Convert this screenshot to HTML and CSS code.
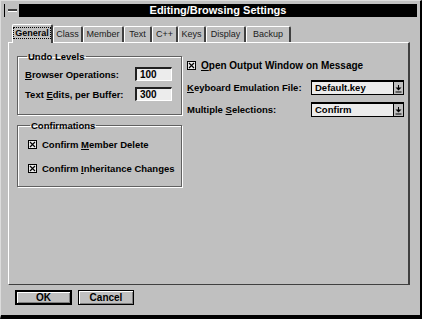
FILE: index.html
```html
<!DOCTYPE html>
<html lang="en">
<head>
  <meta charset="UTF-8">
  <title>Editing/Browsing Settings</title>
  <link rel="stylesheet" href="styles.css">
</head>
<body>
  <div class="window">

    <!-- Title bar -->
    <div class="titlebar">
      <div class="sysmenu"><span class="dash"></span></div>
      <div class="title">Editing/Browsing Settings</div>
    </div>

    <!-- Tabs -->
    <div class="tabs">
      <div class="tab active tab-general"><span class="focus">General</span></div>
      <div class="tab tab-class">Class</div>
      <div class="tab tab-member">Member</div>
      <div class="tab tab-text">Text</div>
      <div class="tab tab-cpp">C++</div>
      <div class="tab tab-keys">Keys</div>
      <div class="tab tab-display">Display</div>
      <div class="tab tab-backup">Backup</div>
    </div>

    <!-- Tab page -->
    <div class="panel">
      <div class="col-left">
        <fieldset class="group undo">
          <legend>Undo Levels</legend>
          <div class="rows">
            <div class="field-row">
              <span class="label"><u>B</u>rowser Operations:</span>
              <span class="edit">100</span>
            </div>
            <div class="field-row">
              <span class="label">Text <u>E</u>dits, per Buffer:</span>
              <span class="edit">300</span>
            </div>
          </div>
        </fieldset>

        <fieldset class="group confirm">
          <legend>Confirmations</legend>
          <div class="rows">
            <div class="check-row">
              <svg class="check" width="9" height="9" viewBox="0 0 9 9"><rect x="0.5" y="0.5" width="8" height="8" fill="#ececec" stroke="#000"/><path d="M2 2L7 7M7 2L2 7" stroke="#000" stroke-width="1.2"/></svg>
              <span class="label">Confirm <u>M</u>ember Delete</span>
            </div>
            <div class="check-row">
              <svg class="check" width="9" height="9" viewBox="0 0 9 9"><rect x="0.5" y="0.5" width="8" height="8" fill="#ececec" stroke="#000"/><path d="M2 2L7 7M7 2L2 7" stroke="#000" stroke-width="1.2"/></svg>
              <span class="label">Confirm <u>I</u>nheritance Changes</span>
            </div>
          </div>
        </fieldset>
      </div>

      <div class="col-right">
        <div class="check-row top-check">
          <svg class="check" width="9" height="9" viewBox="0 0 9 9"><rect x="0.5" y="0.5" width="8" height="8" fill="#ececec" stroke="#000"/><path d="M2 2L7 7M7 2L2 7" stroke="#000" stroke-width="1.2"/></svg>
          <span class="label wide"><u>O</u>pen Output Window on Message</span>
        </div>
        <div class="combo-row">
          <span class="label combo-label"><u>K</u>eyboard Emulation File:</span>
          <div class="combo">
            <span class="combo-text">Default.key</span>
            <span class="combo-btn"><svg width="7" height="9" viewBox="0 0 7 9"><path d="M3.5 1V5" stroke="#000"/><path d="M0.5 3.5H6.5L3.5 6.5Z" fill="#000"/><path d="M0.5 8H6.5" stroke="#000"/></svg></span>
          </div>
        </div>
        <div class="combo-row">
          <span class="label combo-label">Multiple <u>S</u>elections:</span>
          <div class="combo">
            <span class="combo-text">Confirm</span>
            <span class="combo-btn"><svg width="7" height="9" viewBox="0 0 7 9"><path d="M3.5 1V5" stroke="#000"/><path d="M0.5 3.5H6.5L3.5 6.5Z" fill="#000"/><path d="M0.5 8H6.5" stroke="#000"/></svg></span>
          </div>
        </div>
      </div>
    </div>

    <!-- Dialog buttons -->
    <div class="buttons">
      <div class="btn btn-default">OK</div>
      <div class="btn btn-cancel">Cancel</div>
    </div>

  </div>
</body>
</html>
```

FILE: styles.css
```css
body {
  margin: 0;
  background: #000;
}
.window {
  width: 422px;
  height: 319px;
  box-sizing: border-box;
  background: #c0c0c0;
  border-left: 1px solid #dcdcdc;
  border-top: 1px solid #dcdcdc;
  border-right: 2px solid #000;
  border-bottom: 4px solid #000;
  padding: 3px 0 0 3px;
  font-family: "Liberation Sans", Arial, sans-serif;
  color: #000;
}
.titlebar {
  width: 413px;
  height: 13px;
  background: #000;
  display: flex;
  align-items: center;
}
.sysmenu {
  width: 14px;
  height: 13px;
  margin-left: 1px;
  background: #c0c0c0;
  display: flex;
  align-items: center;
  justify-content: center;
}
.dash {
  width: 9px;
  height: 2px;
  background: #404040;
  border-bottom: 1px solid #fff;
}
.title {
  flex: 1;
  text-align: center;
  color: #fff;
  font-weight: bold;
  font-size: 11px;
  line-height: 13px;
}

/* tabs */
.tabs {
  display: flex;
  align-items: flex-end;
  height: 18px;
  margin: 7px 0 0 8px;
}
.tab {
  height: 16px;
  box-sizing: border-box;
  border-top: 1px solid #fff;
  border-left: 1px solid #fff;
  border-right: 2px solid #404040;
  border-radius: 2px 2px 0 0;
  font-size: 9px;
  line-height: 14px;
  text-align: center;
  color: #202020;
}
.tab.active {
  height: 19px;
  margin-bottom: -1px;
  background: #c0c0c0;
  position: relative;
  font-weight: bold;
  color: #000;
  line-height: 16px;
}
.focus {
  outline: 1px dotted #000;
  padding: 0 1px;
}
.tab-general { width: 41px; }
.tab-class { width: 30px; }
.tab-member { width: 41px; }
.tab-text { width: 28px; }
.tab-cpp { width: 26px; }
.tab-keys { width: 28px; }
.tab-display { width: 40px; }
.tab-backup { width: 45px; }

/* tab page */
.panel {
  width: 402px;
  height: 243px;
  box-sizing: border-box;
  border-top: 1px solid #fff;
  border-left: 1px solid #fff;
  border-right: 2px solid #404040;
  border-bottom: 1px solid #404040;
  margin-left: 4px;
  padding: 8px 0 0 8px;
  display: flex;
  gap: 5px;
}
.label {
  font-size: 9.5px;
  font-weight: bold;
  white-space: nowrap;
}
.label.wide {
  font-size: 10px;
}
.col-left {
  width: 165px;
  display: flex;
  flex-direction: column;
  gap: 5px;
}
.group {
  margin: 0;
  border: 1px solid #606060;
  box-shadow: inset 1px 1px 0 #fff, 1px 1px 0 #fff;
  min-width: 0;
}
.group legend {
  font-size: 9.5px;
  font-weight: bold;
  line-height: 11px;
  padding: 0 1px;
  margin-left: 2px;
}
.undo {
  padding: 5px 9px 13px 7px;
}
.confirm {
  padding: 6px 9px 11px 10px;
}
.rows {
  display: flex;
  flex-direction: column;
}
.undo .rows {
  gap: 6px;
}
.confirm .rows {
  gap: 10px;
}
.field-row {
  height: 14px;
  display: flex;
  align-items: center;
  justify-content: space-between;
}
.edit {
  width: 37px;
  height: 14px;
  box-sizing: border-box;
  border-top: 2px solid #202020;
  border-left: 2px solid #202020;
  border-right: 1px solid #fff;
  border-bottom: 1px solid #fff;
  background: #ececec;
  font-size: 10px;
  font-weight: bold;
  line-height: 11px;
  padding-left: 3px;
}
.check-row {
  height: 14px;
  display: flex;
  align-items: center;
  gap: 5px;
}
.check {
  flex: none;
}

/* right column */
.col-right {
  margin-top: 7px;
  display: flex;
  flex-direction: column;
  gap: 7px;
}
.top-check {
  margin-bottom: 1px;
}
.combo-row {
  height: 15px;
  display: flex;
  align-items: center;
}
.combo-label {
  width: 124px;
}
.combo {
  width: 93px;
  height: 15px;
  box-sizing: border-box;
  border: 1px solid #000;
  border-top-width: 2px;
  background: #ececec;
  display: flex;
}
.combo-text {
  flex: 1;
  font-size: 9.5px;
  font-weight: bold;
  line-height: 12px;
  padding-left: 3px;
}
.combo-btn {
  width: 9px;
  border-left: 1px solid #000;
  background: #c0c0c0;
  display: flex;
  align-items: center;
  justify-content: center;
}

/* dialog buttons */
.buttons {
  display: flex;
  gap: 6px;
  margin: 5px 0 0 11px;
}
.btn {
  height: 15px;
  box-sizing: border-box;
  background: #c0c0c0;
  box-shadow: inset 1px 1px 0 #fff, inset -1px -1px 0 #808080;
  font-size: 10px;
  font-weight: bold;
  text-align: center;
}
.btn-default {
  width: 57px;
  border: 2px solid #000;
  line-height: 11px;
}
.btn-cancel {
  width: 56px;
  border: 1px solid #000;
  line-height: 13px;
}
```
